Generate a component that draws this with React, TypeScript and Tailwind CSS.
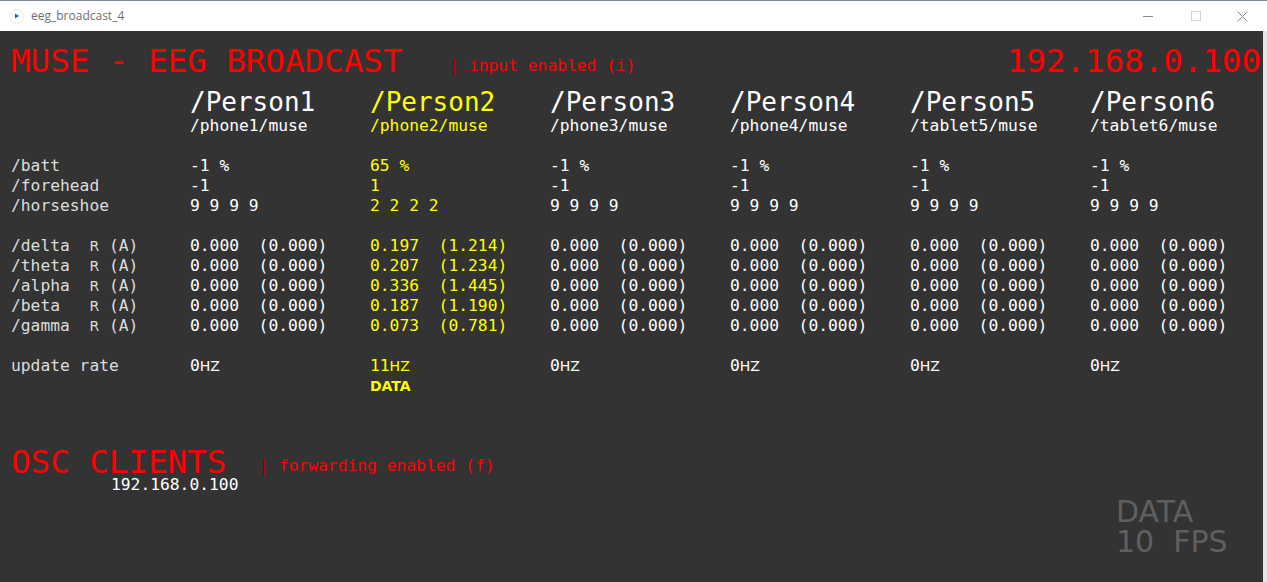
import React from "react";

type Person = {
  name: string;
  device: string;
  batt: string;
  forehead: string;
  horseshoe: string;
  bands: [string, string][];
  rate: string;
  live: boolean;
};

const zero: [string, string][] = [
  ["0.000", "0.000"],
  ["0.000", "0.000"],
  ["0.000", "0.000"],
  ["0.000", "0.000"],
  ["0.000", "0.000"],
];

const idle = (n: number, device: string): Person => ({
  name: `/Person${n}`,
  device,
  batt: "-1 %",
  forehead: "-1",
  horseshoe: "9 9 9 9",
  bands: zero,
  rate: "0",
  live: false,
});

const persons: Person[] = [
  idle(1, "/phone1/muse"),
  {
    name: "/Person2",
    device: "/phone2/muse",
    batt: "65 %",
    forehead: "1",
    horseshoe: "2 2 2 2",
    bands: [
      ["0.197", "1.214"],
      ["0.207", "1.234"],
      ["0.336", "1.445"],
      ["0.187", "1.190"],
      ["0.073", "0.781"],
    ],
    rate: "11",
    live: true,
  },
  idle(3, "/phone3/muse"),
  idle(4, "/phone4/muse"),
  idle(5, "/tablet5/muse"),
  idle(6, "/tablet6/muse"),
];

const bandNames = ["/delta", "/theta", "/alpha", "/beta", "/gamma"];

const tone = (p: Person) => (p.live ? "text-[#ffff00]" : "text-white");

const Row = ({ label, children }: { label: React.ReactNode; children: (p: Person) => React.ReactNode }) => (
  <div className="flex h-5 leading-5 text-[16.3px] whitespace-pre">
    <div className="w-[179px] shrink-0 text-[#dcdcdc]">{label}</div>
    {persons.map((p, i) => (
      <div key={i} className={`w-[180px] shrink-0 ${tone(p)}`}>
        {children(p)}
      </div>
    ))}
  </div>
);

const TitleBar = () => (
  <div className="h-[31px] bg-white border-t border-[#7d8996] flex items-center font-['Open_Sans',sans-serif] shrink-0">
    <div className="ml-[9px] w-[15px] h-[15px] rounded-full border border-[#ececec] flex items-center justify-center">
      <svg width="6" height="6" viewBox="0 0 6 6">
        <path d="M1 0.5 L5 3 L1 5.5 Z" fill="#1a5fd6" />
      </svg>
    </div>
    <span className="ml-[7px] text-[12px] text-[#707070]">eeg_broadcast_4</span>
    <div className="ml-auto flex items-center h-full">
      <div className="w-[46px] h-full flex items-center justify-center">
        <div className="w-[10px] h-px bg-[#8a8a8a]" />
      </div>
      <div className="w-[46px] h-full flex items-center justify-center ml-[2px]">
        <div className="w-[10px] h-[10px] border border-[#d4d4d4]" />
      </div>
      <div className="w-[46px] h-full flex items-center justify-center mr-[2px]">
        <svg width="11" height="11" viewBox="0 0 11 11">
          <path d="M0.5 0.5 L10.5 10.5 M10.5 0.5 L0.5 10.5" stroke="#8a8a8a" strokeWidth="1" />
        </svg>
      </div>
    </div>
  </div>
);

const small = "font-['DejaVu_Sans',sans-serif] text-[14px]";

export default function App() {
  return (
    <div className="w-[1267px] h-[582px] overflow-hidden flex flex-col bg-white">
      <TitleBar />
      <div className="flex flex-1 min-h-0">
        <div className="w-[1263px] shrink-0 bg-[#333333] font-['DejaVu_Sans_Mono',monospace] flex flex-col pl-[11px] overflow-hidden">
          {/* header */}
          <div className="flex items-end h-10 mt-[10px] text-[#ff0000]">
            <span className="text-[32.5px] leading-10 whitespace-pre">MUSE - EEG BROADCAST</span>
            <span className="ml-[47px] mb-[5px] text-[16.3px] leading-5 whitespace-pre">
              <span className="text-[#b00000]">|</span> input enabled (i)
            </span>
            <span className="ml-auto text-[32.5px] leading-10 mr-[2px]">192.168.0.100</span>
          </div>

          {/* person names */}
          <div className="flex mt-[7px]">
            <div className="w-[179px] shrink-0" />
            {persons.map((p, i) => (
              <div key={i} className={`w-[180px] shrink-0 ${tone(p)}`}>
                <div className="text-[26px] h-7 leading-7">{p.name}</div>
                <div className="text-[16.3px] h-5 leading-5">{p.device}</div>
              </div>
            ))}
          </div>

          <div className="mt-5">
            <Row label="/batt">{(p) => p.batt}</Row>
            <Row label="/forehead">{(p) => p.forehead}</Row>
            <Row label="/horseshoe">{(p) => p.horseshoe}</Row>
          </div>

          <div className="mt-5">
            {bandNames.map((b, k) => (
              <Row
                key={b}
                label={
                  <>
                    {b.padEnd(8, " ")}
                    <span className={small}>R</span> (A)
                  </>
                }
              >
                {(p) => `${p.bands[k][0]}  (${p.bands[k][1]})`}
              </Row>
            ))}
          </div>

          <div className="mt-5">
            <Row label="update rate">
              {(p) => (
                <>
                  {p.rate}
                  <span className={small}>HZ</span>
                </>
              )}
            </Row>
            <Row label="">{(p) => (p.live ? <span className={`${small} font-semibold`}>DATA</span> : "")}</Row>
          </div>

          {/* clients */}
          <div className="flex items-end h-[31px] mt-[51px] text-[#ff0000]">
            <span className="text-[32.5px] leading-[31px] whitespace-pre">OSC CLIENTS</span>
            <span className="ml-[33px] mb-[2px] text-[16.3px] leading-5 whitespace-pre">
              <span className="text-[#b00000]">|</span> forwarding enabled (f)
            </span>
          </div>
          <div className="h-4 leading-4 text-[16.3px] text-white pl-[100px] -mt-[1px]">192.168.0.100</div>

          <div className="flex justify-end pr-[33px] mt-[4px]">
            <div className="font-['DejaVu_Sans',sans-serif] text-[30px] text-[#5f5f5f] w-[114px]">
              <div className="h-[30px] leading-[30px]">DATA</div>
              <div className="h-[30px] leading-[30px] whitespace-pre">10  FPS</div>
            </div>
          </div>
        </div>
        <div className="flex-1 bg-[#e6e6e6]" />
      </div>
    </div>
  );
}
